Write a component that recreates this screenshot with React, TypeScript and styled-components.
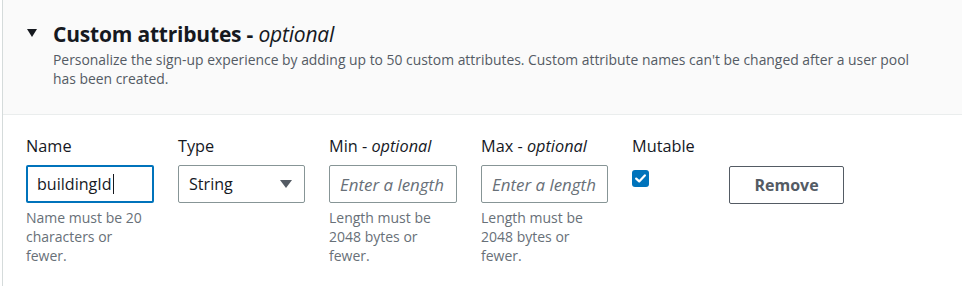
import React from "react";
import styled, { createGlobalStyle } from "styled-components";

const Global = createGlobalStyle`
  html, body { margin: 0; padding: 0; background: #ffffff; }
  body { font-family: "Open Sans", "Noto Sans", Arial, sans-serif; color: #16191f; }
  * { box-sizing: border-box; }
`;

const Page = styled.div`
  padding-left: 2px;
  width: 962px;
  height: 286px;
`;

const Panel = styled.section`
  border-left: 1px solid #d5dbdb;
  height: 100%;
`;

const Header = styled.header`
  background: #fafafa;
  border-bottom: 1px solid #eaeded;
  height: 115px;
  padding: 20px 0 0 24px;
  display: flex;
  align-items: flex-start;
  gap: 16px;
`;

const Caret = styled.svg`
  width: 10px;
  height: 8px;
  margin-top: 9px;
  flex: none;
`;

const HeaderText = styled.div`
  display: flex;
  flex-direction: column;
`;

const Title = styled.h2`
  margin: 0;
  font-size: 21px;
  line-height: 28px;
  font-weight: 700;
  color: #16191f;
  letter-spacing: -0.2px;
  em { font-weight: 400; font-style: italic; }
`;

const Description = styled.p`
  margin: 2px 0 0;
  font-size: 13.9px;
  line-height: 19px;
  color: #545b64;
  max-width: 880px;
`;

const Body = styled.div`
  padding: 20px 0 0 23px;
  display: flex;
  align-items: flex-start;
  gap: 24px;
`;

const Field = styled.div<{ $w: number }>`
  width: ${(p) => p.$w}px;
  display: flex;
  flex-direction: column;
`;

const Label = styled.label`
  font-size: 16.3px;
  line-height: 22px;
  color: #16191f;
  height: 22px;
  white-space: nowrap;
  em { font-style: italic; }
`;

const Input = styled.div<{ $focus?: boolean; $placeholder?: boolean }>`
  margin-top: 8px;
  height: 38px;
  border: ${(p) => (p.$focus ? "2px solid #0073bb" : "1px solid #879596")};
  border-radius: 2px;
  padding: 0 ${(p) => (p.$focus ? 9 : 10)}px;
  display: flex;
  align-items: center;
  font-size: ${(p) => (p.$placeholder ? 16.9 : 16.1)}px;
  color: ${(p) => (p.$placeholder ? "#687078" : "#16191f")};
  font-style: ${(p) => (p.$placeholder ? "italic" : "normal")};
  white-space: nowrap;
  overflow: hidden;
  background: #fff;
`;

const Cursor = styled.span`
  display: inline-block;
  width: 1px;
  height: 20px;
  background: #16191f;
  margin-left: 1px;
`;

const Select = styled(Input)`
  justify-content: space-between;
  padding-right: 12px;
`;

const Help = styled.div`
  margin-top: 5px;
  font-size: 14px;
  line-height: 19px;
  color: #687078;
`;

const CheckBox = styled.span`
  margin-top: 13px;
  width: 17px;
  height: 17px;
  border-radius: 3px;
  background: #0073bb;
  display: flex;
  align-items: center;
  justify-content: center;
`;

const Button = styled.button`
  margin-top: 31px;
  width: 115px;
  height: 38px;
  border: 1px solid #545b64;
  border-radius: 2px;
  background: #fff;
  color: #545b64;
  font-family: inherit;
  font-weight: 700;
  font-size: 16px;
  padding: 0;
`;

export default function App() {
  return (
    <>
      <Global />
      <Page>
        <Panel>
          <Header>
            <Caret viewBox="0 0 10 8">
              <path d="M0 0 H10 L5 8 Z" fill="#16191f" />
            </Caret>
            <HeaderText>
              <Title>
                Custom attributes - <em>optional</em>
              </Title>
              <Description>
                Personalize the sign-up experience by adding up to 50 custom attributes. Custom attribute names can't be changed after a user pool has been created.
              </Description>
            </HeaderText>
          </Header>
          <Body>
            <Field $w={128}>
              <Label>Name</Label>
              <Input $focus>
                buildingId<Cursor />
              </Input>
              <Help>Name must be 20 characters or fewer.</Help>
            </Field>
            <Field $w={127}>
              <Label>Type</Label>
              <Select>
                <span>String</span>
                <svg width="12" height="8" viewBox="0 0 12 8">
                  <path d="M0 0 H12 L6 8 Z" fill="#545b64" />
                </svg>
              </Select>
            </Field>
            <Field $w={128}>
              <Label>
                Min - <em>optional</em>
              </Label>
              <Input $placeholder>Enter a length</Input>
              <Help>Length must be 2048 bytes or fewer.</Help>
            </Field>
            <Field $w={127}>
              <Label>
                Max - <em>optional</em>
              </Label>
              <Input $placeholder>Enter a length</Input>
              <Help>Length must be 2048 bytes or fewer.</Help>
            </Field>
            <Field $w={73}>
              <Label>Mutable</Label>
              <CheckBox>
                <svg width="11" height="9" viewBox="0 0 11 9">
                  <path d="M1.2 4.6 L4.2 7.4 L9.8 1.4" stroke="#fff" strokeWidth="2.2" fill="none" strokeLinecap="round" strokeLinejoin="round" />
                </svg>
              </CheckBox>
            </Field>
            <Button>Remove</Button>
          </Body>
        </Panel>
      </Page>
    </>
  );
}
